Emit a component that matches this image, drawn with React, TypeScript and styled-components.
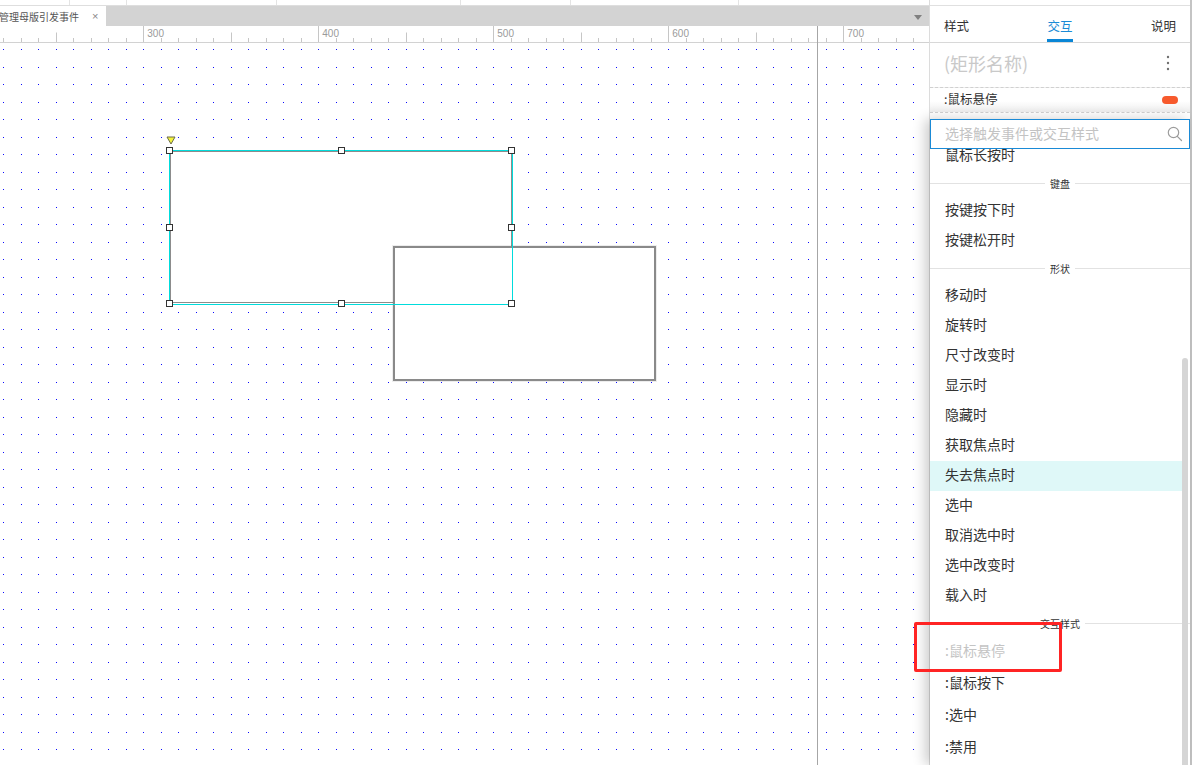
import React from "react";
import styled, { createGlobalStyle } from "styled-components";

const GlobalStyle = createGlobalStyle`
  *, *::before, *::after { box-sizing: border-box; }
  html, body { margin: 0; padding: 0; background: #fff; overflow: hidden; }
  body { font-family: "Noto Sans CJK SC", "Noto Sans", sans-serif; color: #333; }
`;

// ruler scale: 300 sits at x=143.3, 10 units = 17.5px
const UNIT = 1.75;
const toX = (u: number) => 143.3 + (u - 300) * UNIT;
const TICKS = Array.from({ length: 56 }, (_, i) => 220 + i * 10);
const LABELS = [300, 400, 500, 600, 700];
const TOP_SEGMENTS = [70, 57, 150, 184, 110, 168];

const Page = styled.div`
  position: relative;
  width: 1192px;
  height: 765px;
  display: grid;
  grid-template-columns: 930px 262px;
  overflow: hidden;
`;

const Editor = styled.section`
  display: flex;
  flex-direction: column;
  min-height: 0;
  border-right: 1px solid #dcdcdc;
`;

const TopStrip = styled.div`
  height: 6px;
  display: flex;
  border-bottom: 1px solid #dedede;
`;

const Segment = styled.div<{ $w: number }>`
  width: ${(p) => p.$w}px;
  border-right: 1px solid #e4e4e4;
`;

const TabBar = styled.div`
  height: 20px;
  display: flex;
  align-items: stretch;
  background: #d3d3d3;
`;

const DocTab = styled.div`
  width: 106px;
  display: flex;
  align-items: center;
  background: #fff;
  overflow: hidden;
  white-space: nowrap;
  font-size: 10px;
  color: #555;

  span {
    margin-left: -1px;
  }
`;

const CloseMark = styled.i`
  font-style: normal;
  font-family: "Liberation Sans", sans-serif;
  font-size: 11px;
  color: #888;
  margin-left: 13px;
`;

const Caret = styled.div`
  margin-left: auto;
  margin-right: 7px;
  align-self: center;
  margin-top: 3px;
  width: 0;
  height: 0;
  border-left: 4px solid transparent;
  border-right: 4px solid transparent;
  border-top: 5px solid #808080;
`;

const Workspace = styled.div`
  position: relative;
  flex: 1;
  display: flex;
  flex-direction: column;
  min-height: 0;
`;

const Ruler = styled.div`
  position: relative;
  height: 17px;
  border-bottom: 1px solid #d2d2d2;
  overflow: hidden;

  svg {
    display: block;
  }
`;

const RulerLabel = styled.span`
  position: absolute;
  top: 2px;
  font-family: "Liberation Sans", sans-serif;
  font-size: 10px;
  line-height: 12px;
  color: #9a9a9a;
`;

const Guide = styled.div`
  position: absolute;
  left: 817px;
  top: 0;
  bottom: 0;
  width: 1px;
  background: #a6a6a6;
  z-index: 3;
`;

const Canvas = styled.div`
  position: relative;
  flex: 1;
  overflow: hidden;
  background: #fff;
`;

const DotLayer = styled.svg`
  position: absolute;
  inset: 0;
  width: 100%;
  height: 100%;
`;

const Widget = styled.div<{ $x: number; $y: number; $w: number; $h: number }>`
  position: absolute;
  left: ${(p) => p.$x}px;
  top: ${(p) => p.$y}px;
  width: ${(p) => p.$w}px;
  height: ${(p) => p.$h}px;
`;

const ThinRect = styled(Widget)`
  background: #fff;
  border: 1px solid #8c8c8c;
`;

const ThickRect = styled(Widget)`
  background: #fff;
  border: 2px solid #8a8a8a;
  box-shadow: 0 0 0 1px rgba(0, 0, 0, 0.07);
`;

const SelectionFrame = styled(Widget)`
  border: 1px solid #00dcdc;
`;

const Handle = styled.div<{ $x: number; $y: number }>`
  position: absolute;
  left: ${(p) => p.$x}px;
  top: ${(p) => p.$y}px;
  width: 7px;
  height: 7px;
  background: #fff;
  border: 1.5px solid #333;
`;

const Anchor = styled.svg`
  position: absolute;
  left: 166px;
  top: 93px;
`;

const Panel = styled.aside`
  position: relative;
  display: flex;
  flex-direction: column;
  background: #fff;
  border-right: 2px solid #c4c4c4;
`;

const PanelTop = styled.div`
  height: 6px;
  border-bottom: 1px solid #e0e0e0;
`;

const Tabs = styled.nav`
  height: 37px;
  display: flex;
  justify-content: space-between;
  padding: 0 14px;
  border-bottom: 1px solid #d8d8d8;
`;

const Tab = styled.div<{ $active?: boolean }>`
  position: relative;
  display: flex;
  align-items: center;
  padding-top: 2px;
  font-size: 12.5px;
  color: ${(p) => (p.$active ? "#1a8bd6" : "#333")};

  &::after {
    content: "";
    display: ${(p) => (p.$active ? "block" : "none")};
    position: absolute;
    left: 0;
    right: 0;
    bottom: 0;
    height: 3px;
    background: #0a86d6;
  }
`;

const NameRow = styled.div`
  height: 44px;
  display: flex;
  align-items: center;
  justify-content: space-between;
  padding: 0 20px 4px 14px;
`;

const NamePlaceholder = styled.div`
  font-size: 18px;
  color: #c9c9c9;
`;

const TriggerRow = styled.div`
  height: 26px;
  display: flex;
  align-items: center;
  justify-content: space-between;
  padding: 0 12px 0 14px;
  border-top: 1px dashed #d0d0d0;
  border-bottom: 1px dashed #d0d0d0;
  background: linear-gradient(to bottom, #fff 55%, #ededed);
  font-size: 12.5px;
  color: #333;

  span:first-child {
    margin-top: -3px;
  }
`;

const Pill = styled.span`
  width: 16px;
  height: 8px;
  border-radius: 4px;
  background: #f75a2d;
`;

const Popover = styled.div`
  position: absolute;
  top: 119px;
  left: 0;
  right: 0;
  bottom: 0;
  display: flex;
  flex-direction: column;
  background: #fff;
  box-shadow: -5px 0 12px rgba(0, 0, 0, 0.2);
  z-index: 4;
`;

const SearchBox = styled.label`
  height: 30px;
  flex-shrink: 0;
  display: flex;
  align-items: center;
  padding: 0 6px 0 14px;
  border: 1px solid #1a8ad6;
  background: #fff;
  position: relative;
  z-index: 1;

  input {
    flex: 1;
    min-width: 0;
    border: none;
    outline: none;
    padding: 0 0 2px;
    font-family: inherit;
    font-size: 14px;
    color: #333;
    background: transparent;
  }

  input::placeholder {
    color: #c3c3c3;
  }
`;

const ListArea = styled.div`
  position: relative;
  flex: 1;
  min-height: 0;
  overflow: hidden;
`;

const ListInner = styled.div`
  margin-top: -8px;
`;

const Item = styled.div<{ $h: number; $active?: boolean; $muted?: boolean }>`
  height: ${(p) => p.$h}px;
  display: flex;
  align-items: center;
  padding: 0 0 4px 15px;
  margin-right: 8px;
  font-size: 14px;
  color: ${(p) => (p.$muted ? "#c4c4c4" : "#333")};
  background: ${(p) => (p.$active ? "#dff8f8" : "transparent")};
`;

const Divider = styled.div`
  height: 25px;
  display: flex;
  align-items: center;
  gap: 5px;
  font-size: 10px;
  color: #333;

  &::before,
  &::after {
    content: "";
    flex: 1;
    height: 1px;
    background: #e2e2e2;
  }
`;

const ScrollThumb = styled.div`
  position: absolute;
  right: 2px;
  top: 209px;
  bottom: 0;
  width: 6px;
  border-radius: 3px 3px 0 0;
  background: #d5d5d5;
`;

const Annotation = styled.div`
  position: absolute;
  left: 914px;
  top: 622px;
  width: 148px;
  height: 50px;
  border: 3px solid #ff2424;
  border-radius: 2px;
  z-index: 6;
`;

type Row =
  | { kind: "item"; label: string; h?: number; active?: boolean; muted?: boolean }
  | { kind: "divider"; label: string };

const rows: Row[] = [
  { kind: "item", label: "鼠标长按时" },
  { kind: "divider", label: "键盘" },
  { kind: "item", label: "按键按下时" },
  { kind: "item", label: "按键松开时" },
  { kind: "divider", label: "形状" },
  { kind: "item", label: "移动时" },
  { kind: "item", label: "旋转时" },
  { kind: "item", label: "尺寸改变时" },
  { kind: "item", label: "显示时" },
  { kind: "item", label: "隐藏时" },
  { kind: "item", label: "获取焦点时" },
  { kind: "item", label: "失去焦点时", active: true },
  { kind: "item", label: "选中" },
  { kind: "item", label: "取消选中时" },
  { kind: "item", label: "选中改变时" },
  { kind: "item", label: "载入时" },
  { kind: "divider", label: "交互样式" },
  { kind: "item", label: ":鼠标悬停", h: 32, muted: true },
  { kind: "item", label: ":鼠标按下", h: 32 },
  { kind: "item", label: ":选中", h: 32 },
  { kind: "item", label: ":禁用", h: 32 },
];

// handle top-left corners, canvas coords (canvas starts at page y=43)
const handles = [
  [166, 104], [338, 104], [508, 104],
  [166, 181], [508, 181],
  [166, 257], [338, 257], [508, 257],
];

const RulerTicks = () => (
  <svg width={930} height={16}>
    {TICKS.map((u) => {
      const x = Math.round(toX(u)) + 0.5;
      const top = u % 100 === 0 ? 0 : u % 50 === 0 ? 6.5 : 12;
      return <line key={u} x1={x} x2={x} y1={top} y2={16} stroke="#c6c6c6" strokeWidth={1} />;
    })}
  </svg>
);

const Kebab = () => (
  <svg width="4" height="16" viewBox="0 0 4 16">
    <circle cx="2" cy="2" r="1.2" fill="#707070" />
    <circle cx="2" cy="8" r="1.2" fill="#707070" />
    <circle cx="2" cy="14" r="1.2" fill="#707070" />
  </svg>
);

const SearchIcon = () => (
  <svg width="16" height="16" viewBox="0 0 16 16" fill="none" stroke="#9c9c9c" strokeWidth="1.2">
    <circle cx="6.5" cy="6.5" r="5.2" />
    <line x1="10.3" y1="10.3" x2="14.5" y2="14.5" strokeLinecap="round" />
  </svg>
);

export default function App() {
  return (
    <Page>
      <GlobalStyle />
      <Editor>
        <TopStrip>
          {TOP_SEGMENTS.map((w, i) => (
            <Segment key={i} $w={w} />
          ))}
        </TopStrip>
        <TabBar>
          <DocTab>
            <span>管理母版引发事件</span>
            <CloseMark>×</CloseMark>
          </DocTab>
          <Caret />
        </TabBar>
        <Workspace>
          <Ruler>
            <RulerTicks />
            {LABELS.map((u) => (
              <RulerLabel key={u} style={{ left: toX(u) + 4 }}>
                {u}
              </RulerLabel>
            ))}
          </Ruler>
          <Canvas>
            <DotLayer>
              <defs>
                {/* two dots per 35px tile keeps the 17.5px pitch on whole pixels */}
                <pattern id="dots" x="3" y="6" width="35" height="35" patternUnits="userSpaceOnUse">
                  <g fill="#0a0aff" shapeRendering="crispEdges">
                    <rect x="0" y="0" width="1" height="1" />
                    <rect x="18" y="0" width="1" height="1" />
                    <rect x="0" y="18" width="1" height="1" />
                    <rect x="18" y="18" width="1" height="1" />
                  </g>
                </pattern>
              </defs>
              <rect width="100%" height="100%" fill="url(#dots)" />
            </DotLayer>
            <ThinRect $x={170} $y={108} $w={342} $h={152} />
            <ThickRect $x={393} $y={203} $w={263} $h={135} />
            <SelectionFrame $x={169} $y={107} $w={344} $h={155} />
            {handles.map(([x, y], i) => (
              <Handle key={i} $x={x} $y={y} />
            ))}
            <Anchor width="10" height="9" viewBox="0 0 10 9">
              <polygon points="1,1 9,1 5,8" fill="#f4f43c" stroke="#6a6a4a" strokeWidth="1" strokeLinejoin="round" />
            </Anchor>
          </Canvas>
          <Guide />
        </Workspace>
      </Editor>

      <Panel>
        <PanelTop />
        <Tabs>
          <Tab>样式</Tab>
          <Tab $active>交互</Tab>
          <Tab>说明</Tab>
        </Tabs>
        <NameRow>
          <NamePlaceholder>(矩形名称)</NamePlaceholder>
          <Kebab />
        </NameRow>
        <TriggerRow>
          <span>:鼠标悬停</span>
          <Pill />
        </TriggerRow>

        <Popover>
          <SearchBox>
            <input placeholder="选择触发事件或交互样式" />
            <SearchIcon />
          </SearchBox>
          <ListArea>
            <ListInner>
              {rows.map((row, i) =>
                row.kind === "divider" ? (
                  <Divider key={i}>{row.label}</Divider>
                ) : (
                  <Item key={i} $h={row.h ?? 30} $active={row.active} $muted={row.muted}>
                    {row.label}
                  </Item>
                )
              )}
            </ListInner>
            <ScrollThumb />
          </ListArea>
        </Popover>
      </Panel>

      <Annotation />
    </Page>
  );
}
